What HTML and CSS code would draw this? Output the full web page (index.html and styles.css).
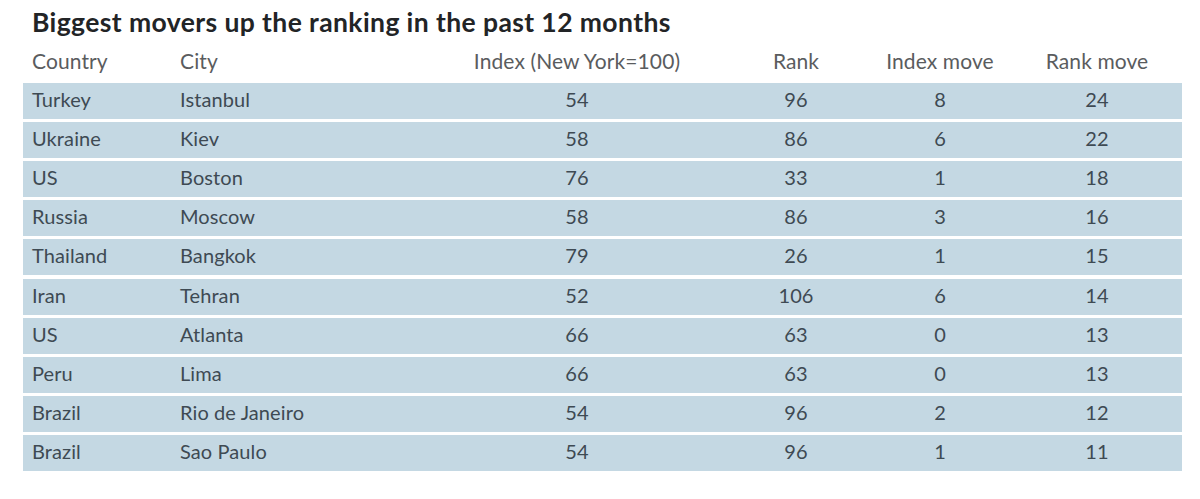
FILE: index.html
```html
<!DOCTYPE html>
<html>
<head>
<meta charset="utf-8">
<link rel="stylesheet" href="styles.css">
</head>
<body>
<div class="chart">
  <h1 class="title">Biggest movers up the ranking in the past 12 months</h1>
  <div class="table">
    <div class="row head">
      <span class="c-country">Country</span>
      <span class="c-city">City</span>
      <span class="c-index">Index (New York=100)</span>
      <span class="c-rank">Rank</span>
      <span class="c-imove">Index move</span>
      <span class="c-rmove">Rank move</span>
    </div>
    <div class="row body"><span class="c-country">Turkey</span><span class="c-city">Istanbul</span><span class="c-index">54</span><span class="c-rank">96</span><span class="c-imove">8</span><span class="c-rmove">24</span></div>
    <div class="row body"><span class="c-country">Ukraine</span><span class="c-city">Kiev</span><span class="c-index">58</span><span class="c-rank">86</span><span class="c-imove">6</span><span class="c-rmove">22</span></div>
    <div class="row body"><span class="c-country">US</span><span class="c-city">Boston</span><span class="c-index">76</span><span class="c-rank">33</span><span class="c-imove">1</span><span class="c-rmove">18</span></div>
    <div class="row body"><span class="c-country">Russia</span><span class="c-city">Moscow</span><span class="c-index">58</span><span class="c-rank">86</span><span class="c-imove">3</span><span class="c-rmove">16</span></div>
    <div class="row body"><span class="c-country">Thailand</span><span class="c-city">Bangkok</span><span class="c-index">79</span><span class="c-rank">26</span><span class="c-imove">1</span><span class="c-rmove">15</span></div>
    <div class="row body"><span class="c-country">Iran</span><span class="c-city">Tehran</span><span class="c-index">52</span><span class="c-rank">106</span><span class="c-imove">6</span><span class="c-rmove">14</span></div>
    <div class="row body"><span class="c-country">US</span><span class="c-city">Atlanta</span><span class="c-index">66</span><span class="c-rank">63</span><span class="c-imove">0</span><span class="c-rmove">13</span></div>
    <div class="row body"><span class="c-country">Peru</span><span class="c-city">Lima</span><span class="c-index">66</span><span class="c-rank">63</span><span class="c-imove">0</span><span class="c-rmove">13</span></div>
    <div class="row body"><span class="c-country">Brazil</span><span class="c-city">Rio de Janeiro</span><span class="c-index">54</span><span class="c-rank">96</span><span class="c-imove">2</span><span class="c-rmove">12</span></div>
    <div class="row body"><span class="c-country">Brazil</span><span class="c-city">Sao Paulo</span><span class="c-index">54</span><span class="c-rank">96</span><span class="c-imove">1</span><span class="c-rmove">11</span></div>
  </div>
</div>
</body>
</html>
```
FILE: styles.css
```css
html, body {
  margin: 0;
  padding: 0;
  background: #ffffff;
}
body {
  font-family: Lato, "Open Sans", "Liberation Sans", sans-serif;
}
.chart {
  width: 1200px;
  height: 499px;
  padding: 0 18px 0 23px;
  box-sizing: border-box;
}
.title {
  margin: 0;
  padding: 6px 0 0 9px;
  height: 44px;
  box-sizing: border-box;
  font-size: 26.5px;
  line-height: 32px;
  font-weight: 700;
  color: #222426;
  letter-spacing: 0.4px;
}
.table {
  display: flex;
  flex-direction: column;
  gap: 3.1px;
  width: 1159px;
}
.row {
  display: grid;
  grid-template-columns: 9px 148px 292px 210px 54px 120px 24px 120px 37px 120px 1fr;
  align-items: center;
  height: 36px;
  box-sizing: border-box;
  white-space: nowrap;
}
.head {
  color: #5a5c5e;
  font-size: 21px;
  line-height: 34px;
  padding-bottom: 2px;
  letter-spacing: 0.1px;
}
.body {
  background: #c4d8e3;
  color: #3e4a53;
  font-size: 20px;
  line-height: 33px;
  padding-bottom: 3px;
  letter-spacing: 0.1px;
}
.c-country { grid-column: 2; }
.c-city { grid-column: 3; }
.c-index { grid-column: 4; text-align: center; }
.c-rank { grid-column: 6; text-align: center; }
.c-imove { grid-column: 8; text-align: center; }
.c-rmove { grid-column: 10; text-align: center; }
```
